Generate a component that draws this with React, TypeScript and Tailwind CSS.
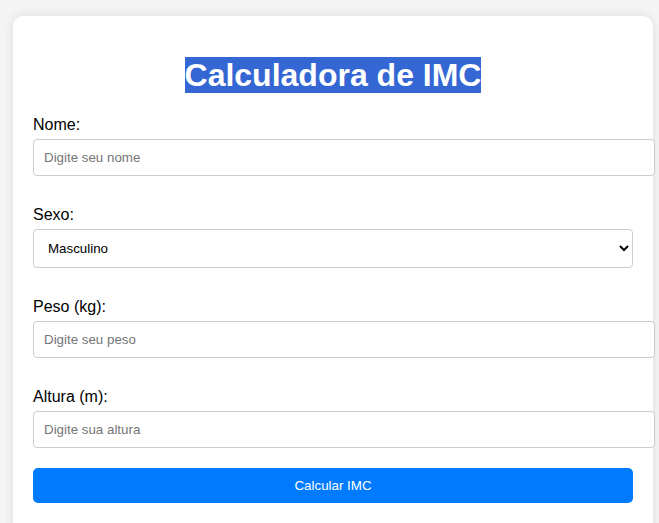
import React from "react";

export default function App() {
  const font = "font-['Liberation_Sans',Arial,sans-serif]";
  const inputCls =
    "block box-content w-[600px] px-[10px] py-[10px] h-[15px] border border-[#cccccc] rounded-[4px] text-[13.33px] leading-[15px] text-black placeholder:text-[#757575] bg-white outline-none " +
    font;
  return (
    <div className={"h-[523px] bg-[#f4f4f4] pt-[16px] pl-[13px] overflow-hidden " + font}>
      <div className="w-[640px] bg-white rounded-[10px] shadow-[0_0_10px_rgba(0,0,0,0.1)] px-[20px] pt-[20px] pb-[40px]">
        <h1 className="text-center text-[32px] font-bold leading-[37px] mt-[21px] mb-[22px] text-white">
          <span className="bg-[#3466d4]">Calculadora de IMC</span>
        </h1>
        <label className="block text-[16px] leading-[18px] text-black mb-[5px]">Nome:</label>
        <input type="text" placeholder="Digite seu nome" className={inputCls} />
        <label className="block text-[16px] leading-[18px] text-black mt-[30px] mb-[5px]">Sexo:</label>
        <select
          defaultValue="Masculino"
          className={
            "block w-[600px] h-[39px] px-[10px] border border-[#cccccc] rounded-[4px] text-[13.33px] text-black bg-white " +
            font
          }
        >
          <option>Masculino</option>
          <option>Feminino</option>
        </select>
        <label className="block text-[16px] leading-[18px] text-black mt-[30px] mb-[5px]">Peso (kg):</label>
        <input type="text" placeholder="Digite seu peso" className={inputCls} />
        <label className="block text-[16px] leading-[18px] text-black mt-[30px] mb-[5px]">Altura (m):</label>
        <input type="text" placeholder="Digite sua altura" className={inputCls} />
        <button
          className={
            "block mt-[20px] w-[600px] h-[35px] bg-[#007bff] text-white text-[13.33px] rounded-[5px] " + font
          }
        >
          Calcular IMC
        </button>
      </div>
    </div>
  );
}
